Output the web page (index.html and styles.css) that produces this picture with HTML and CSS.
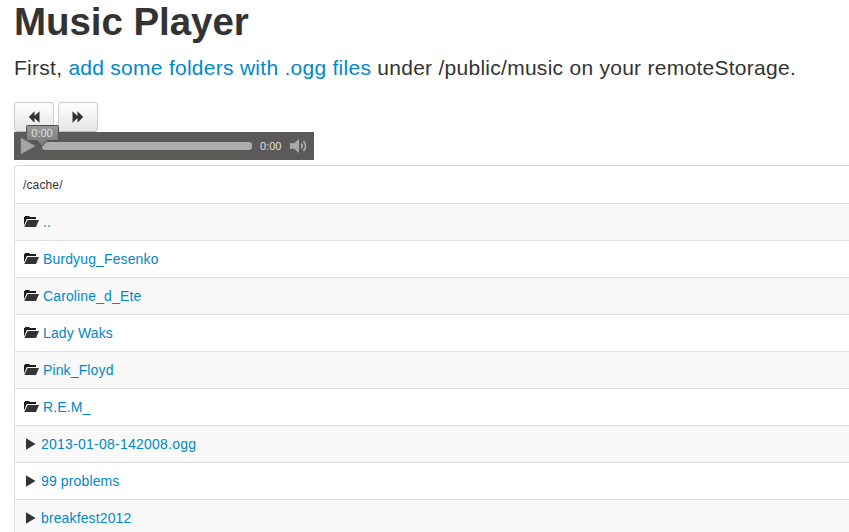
FILE: index.html
```html
<!DOCTYPE html>
<html lang="en">
<head>
<meta charset="utf-8">
<title>Music Player</title>
<link rel="stylesheet" href="styles.css">
</head>
<body>
<svg class="defs" width="0" height="0">
  <symbol id="folder" viewBox="0 0 16 14">
    <path d="M1 10V2h1V1h4l1 1h6v2H3.800L1.500 9.500z" fill="#1c1c1c"/>
    <path d="M4.600 5H16L13 12H1.300z" fill="#333"/>
  </symbol>
  <symbol id="play" viewBox="0 0 14 14"><path d="M3 1.300 12.500 7 3 12.700z" fill="#333"/></symbol>
</svg>
<main class="page">
  <h1>Music Player</h1>
  <p class="lead">First, <a href="#">add some folders with .ogg files</a> under /public/music on your remoteStorage.</p>
  <div class="buttons">
    <button class="btn" aria-label="Previous"><svg width="14" height="14" viewBox="0 0 14 14"><path d="M7.500 1.200V6l5-4.800v11.600l-5-4.800v4.800L1.800 7z" fill="#333"/></svg></button>
    <button class="btn" aria-label="Next"><svg width="14" height="14" viewBox="0 0 14 14"><path d="M6.500 1.200V6l-5-4.800v11.600l5-4.800v4.800L12.200 7z" fill="#333"/></svg></button>
  </div>
  <div class="player">
    <svg class="start" width="16" height="18" viewBox="0 0 16 18"><path d="M1 1 15 9 1 17z" fill="#a5a5a5" stroke="#929292" stroke-width=".6"/></svg>
    <div class="track"></div>
    <span class="time">0:00</span>
    <svg class="volume" width="20" height="18" viewBox="0 0 20 18"><path d="M1 6.300h4L10 2v14l-5-4.300H1z" fill="#aaa"/><path d="M12.200 6.500q2 2.500 0 5M14.400 4q4.400 5 0 10" fill="none" stroke="#aaa" stroke-width="1.700"/></svg>
    <div class="bubble"><svg width="34" height="24" viewBox="0 0 34 24"><defs><linearGradient id="g" x2="0" y2="1"><stop stop-color="#999"/><stop offset="1" stop-color="#777"/></linearGradient></defs><path d="M2.500.5h30q1 0 1 1v13q0 1-1 1H22.500L17 21.500l-5.500-6h-9q-1 0-1-1v-13q0-1 1-1z" fill="url(#g)" stroke="#505050"/></svg><span>0:00</span></div>
  </div>
  <div class="list">
    <div class="row path">/cache/</div>
    <div class="row"><svg class="folder"><use href="#folder"/></svg><a href="#">..</a></div>
    <div class="row"><svg class="folder"><use href="#folder"/></svg><a href="#">Burdyug_Fesenko</a></div>
    <div class="row"><svg class="folder"><use href="#folder"/></svg><a href="#">Caroline_d_Ete</a></div>
    <div class="row"><svg class="folder"><use href="#folder"/></svg><a href="#">Lady Waks</a></div>
    <div class="row"><svg class="folder"><use href="#folder"/></svg><a href="#">Pink_Floyd</a></div>
    <div class="row"><svg class="folder"><use href="#folder"/></svg><a href="#">R.E.M_</a></div>
    <div class="row"><svg class="play"><use href="#play"/></svg><a class="dated" href="#">2013-01-08-142008.ogg</a></div>
    <div class="row"><svg class="play"><use href="#play"/></svg><a href="#">99 problems</a></div>
    <div class="row"><svg class="play"><use href="#play"/></svg><a href="#">breakfest2012</a></div>
  </div>
</main>
</body>
</html>
```
FILE: styles.css
```css
* { box-sizing: border-box; }
html { overflow: hidden; }
body { margin: 0; background: #fff; color: #333; font: 14px/20px "Liberation Sans", Arial, sans-serif; overflow: hidden; height: 532px; }
a { color: #0088cc; text-decoration: none; }
.defs { display: block; height: 0; }
.page { padding-left: 14px; }
h1 { margin: 0; height: 53px; font-size: 38.5px; line-height: 44px; letter-spacing: -0.06px; }
.lead { margin: 0; height: 49px; font-size: 21px; line-height: 30px; letter-spacing: 0.27px; white-space: nowrap; }
.buttons { display: flex; gap: 4px; height: 30px; }
.btn { width: 40px; height: 30px; padding: 0; display: flex; align-items: center; justify-content: center; border: 1px solid #ccc; border-bottom-color: #bbb; border-radius: 4px; background: linear-gradient(#fff, #e6e6e6); }
.player { position: relative; display: flex; align-items: center; width: 300px; height: 28px; padding-left: 6px; background: #5b5a59; }
.track { width: 210px; height: 8px; margin-left: 6px; border-radius: 3px; background: #aeacac; }
.time { width: 22px; margin-left: 8px; color: #e0e0e0; font-size: 11px; line-height: 28px; }
.volume { margin-left: 7px; }
.bubble { position: absolute; left: 11px; top: -7px; width: 34px; height: 24px; color: #ddd; font-size: 11px; line-height: 17px; text-align: center; }
.bubble svg { position: absolute; left: 0; top: 0; }
.bubble span { position: relative; }
.list { margin-top: 5px; border: 1px solid #ddd; border-right: 0; border-bottom: 0; border-top-left-radius: 4px; }
.row { display: flex; align-items: center; height: 37px; padding-left: 8px; border-top: 1px solid #ddd; white-space: nowrap; letter-spacing: 0.13px; }
.row:nth-child(even) { background: #f9f9f9; }
.path { height: 37px; border-top: 0; font-size: 12px; }
.dated { letter-spacing: 0.24px; }
.folder { width: 16px; height: 14px; margin-right: 4px; }
.play { width: 14px; height: 14px; margin-right: 4px; }
```
